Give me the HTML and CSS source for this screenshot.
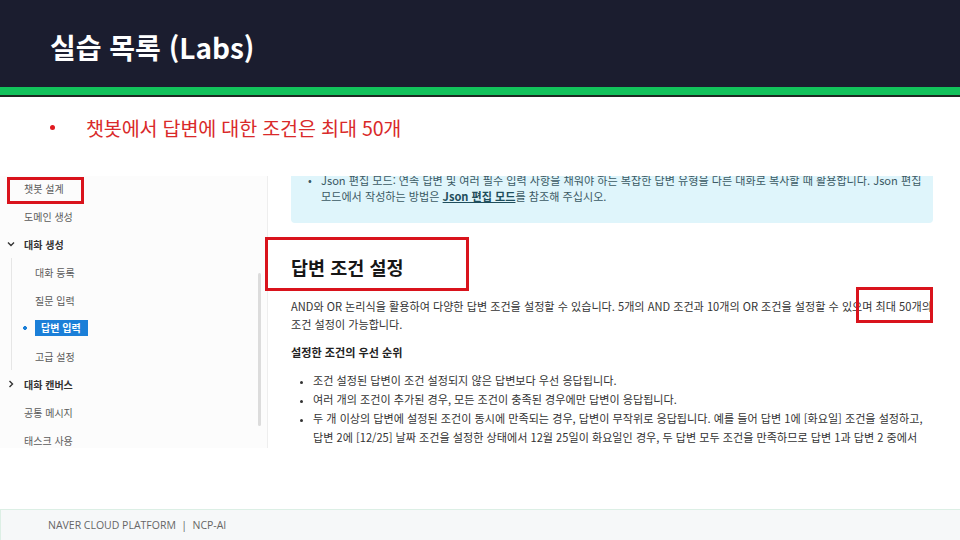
FILE: index.html
```
<!DOCTYPE html>
<html lang="ko">
   <head>
      <meta charset="utf-8">
      <title>실습 목록 (Labs)</title>
      <link rel="stylesheet" href="styles.css">
   </head>
   <body>
      <div class="slide">

         <!-- Title bar -->
         <header class="topbar">
            <h1>실습 목록 (Labs)</h1>
         </header>
         <div class="accent"></div>

         <ul class="points">
            <li>챗봇에서 답변에 대한 조건은 최대 50개</li>
         </ul>

         <!--
         Captured documentation page
         -->
         <section class="shot">
            <nav class="side">
               <ul class="tree">
                  <li class="item">챗봇 설계</li>
                  <li class="item">도메인 생성</li>
                  <li class="item group">
                     <svg class="chev" viewBox="0 0 8 8"><path d="M1,2.5 L4,5.5 L7,2.5" /></svg>
                     대화 생성
                  </li>
                  <li>
                     <ul class="sub">
                        <li>대화 등록</li>
                        <li>질문 입력</li>
                        <li class="active"><span>답변 입력</span></li>
                        <li>고급 설정</li>
                     </ul>
                  </li>
                  <li class="item group">
                     <svg class="chev" viewBox="0 0 8 8"><path d="M2.5,1 L5.5,4 L2.5,7" /></svg>
                     대화 캔버스
                  </li>
                  <li class="item">공통 메시지</li>
                  <li class="item">태스크 사용</li>
               </ul>
               <div class="track"><div class="thumb"></div></div>
            </nav>

            <article class="doc">
               <div class="note">
                  <p class="note-line"><span class="dot">•</span>Json 편집 모드: 연속 답변 및 여러 필수 입력 사항을 채워야 하는 복잡한 답변 유형을 다른 대화로 복사할 때 활용합니다. Json 편집</p>
                  <p class="note-line indent">모드에서 작성하는 방법은 <a href="#">Json 편집 모드</a>를 참조해 주십시오.</p>
               </div>

               <h2>답변 조건 설정</h2>

               <p class="para">AND와 OR 논리식을 활용하여 다양한 답변 조건을 설정할 수 있습니다. 5개의 AND 조건과 10개의 OR 조건을 설정할 수 있으며 최대 50개의<br>조건 설정이 가능합니다.</p>

               <h3>설정한 조건의 우선 순위</h3>

               <ul class="rules">
                  <li>조건 설정된 답변이 조건 설정되지 않은 답변보다 우선 응답됩니다.</li>
                  <li>여러 개의 조건이 추가된 경우, 모든 조건이 충족된 경우에만 답변이 응답됩니다.</li>
                  <li>두 개 이상의 답변에 설정된 조건이 동시에 만족되는 경우, 답변이 무작위로 응답됩니다. 예를 들어 답변 1에 [화요일] 조건을 설정하고,<br>답변 2에 [12/25] 날짜 조건을 설정한 상태에서 12월 25일이 화요일인 경우, 두 답변 모두 조건을 만족하므로 답변 1과 답변 2 중에서</li>
               </ul>
            </article>

            <!-- red highlight marks drawn over the capture -->
            <div class="mark mark-nav"></div>
            <div class="mark mark-head"></div>
            <div class="mark mark-max"></div>
         </section>

         <footer class="foot">
            NAVER CLOUD PLATFORM &nbsp;|&nbsp; NCP-AI
         </footer>
      </div>
   </body>
</html>
```

FILE: styles.css
```
body {
   margin : 0;
   background : #ffffff;
   font-family : "Noto Sans CJK KR", "Noto Sans", sans-serif;
}

.slide {
   width : 960px;
   height : 540px;
   display : flex;
   flex-direction : column;
   overflow : hidden;
}

/* title bar */

.topbar {
   height : 87px;
   background : #1b1d2f;
   display : flex;
   align-items : center;
   padding : 0 0 0 50px;
}

.topbar h1 {
   margin : 0;
   padding-top : 6px;
   color : #ffffff;
   font-size : 28px;
   font-weight : 700;
}

.accent {
   height : 8px;
   background : #12c25b;
   border-bottom : 2px solid #1d2a22;
}

.points {
   list-style : none;
   margin : 18px 0 0 0;
   padding : 0 0 0 50px;
}

.points li {
   display : flex;
   align-items : center;
   height : 24px;
   color : #d92a2a;
   font-size : 19.6px;
   letter-spacing : -0.2px;
}

.points li::before {
   content : "";
   width : 5px;
   height : 5px;
   border-radius : 50%;
   background : #e0191f;
   margin-right : 31px;
}

/* captured page */

.shot {
   position : relative;
   margin-top : 37px;
   height : 272px;
   display : flex;
   overflow : hidden;
}

.side {
   width : 267px;
   flex : none;
   display : flex;
   background : #fcfcfc;
   border-right : 1px solid #eeeeee;
}

.tree {
   flex : 1;
   list-style : none;
   margin : -2px 0 0 0;
   padding : 0;
   font-size : 10px;
   color : #5a5a5a;
}

.item {
   display : flex;
   align-items : center;
   height : 28px;
   padding-left : 24px;
}

.group {
   position : relative;
   padding-left : 7px;
   color : #333333;
   font-weight : 700;
}

.chev {
   width : 8px;
   height : 8px;
   margin-right : 9px;
}

.chev path {
   fill : none;
   stroke : #333333;
   stroke-width : 1.4;
}

.sub {
   list-style : none;
   margin : 0 0 0 11px;
   padding : 0;
   border-left : 1px solid #e6e6e6;
}

.sub li {
   display : flex;
   align-items : center;
   height : 28px;
}

.sub li::before {
   content : "";
   width : 23px;
   height : 8px;
   flex : none;
}

.sub li.active::before {
   background : radial-gradient(circle at 13px 50%, #1b7fd8 1.6px, transparent 2.2px);
}

.sub li.active span {
   background : #1b7fd8;
   color : #ffffff;
   font-weight : 700;
   padding : 0 7px 0 6px;
   line-height : 16px;
}

.track {
   width : 3px;
   margin-right : 6px;
}

.thumb {
   margin-top : 97px;
   height : 153px;
   background : #dcdcdc;
   border-radius : 2px;
}

.doc {
   width : 642px;
   padding-left : 23px;
   font-size : 11.1px;
   color : #333333;
}

.note {
   margin-top : -15px;
   background : #dff5fb;
   border-radius : 4px;
   padding : 11px 0 19px 17px;
   color : #3b5963;
}

.note p {
   margin : 0;
   line-height : 16px;
   white-space : nowrap;
}

.dot {
   display : inline-block;
   width : 13px;
}

.indent {
   padding-left : 13px;
}

.note a {
   color : #1f4e5c;
   font-weight : 700;
}

.doc h2 {
   margin : 30px 0 0 0;
   line-height : 28px;
   font-size : 18.5px;
   font-weight : 700;
   color : #161616;
}

.para {
   margin : 16px 0 0 0;
   line-height : 18px;
   white-space : nowrap;
}

.doc h3 {
   margin : 10px 0 0 0;
   line-height : 18px;
   font-size : 11.1px;
   font-weight : 700;
   color : #222222;
}

.rules {
   margin : 10px 0 0 0;
   padding : 0 0 0 22px;
   line-height : 19px;
   white-space : nowrap;
}

.rules li::marker {
   font-size : 9px;
}

/* red highlight marks */

.mark {
   position : absolute;
   border : 3px solid #d9131c;
   box-sizing : border-box;
}

.mark-nav {
   left : 7px;
   top : 1px;
   width : 77px;
   height : 27px;
}

.mark-head {
   left : 265px;
   top : 61px;
   width : 204px;
   height : 54px;
}

.mark-max {
   left : 856px;
   top : 111px;
   width : 77px;
   height : 36px;
}

/* footer */

.foot {
   margin-top : auto;
   height : 30px;
   background : #f6f8f9;
   border-top : 1px solid #dcefe5;
   border-left : 1px solid #dcefe5;
   display : flex;
   align-items : center;
   padding-left : 47px;
   font-family : "Open Sans", sans-serif;
   font-size : 10.5px;
   color : #666666;
}
```
